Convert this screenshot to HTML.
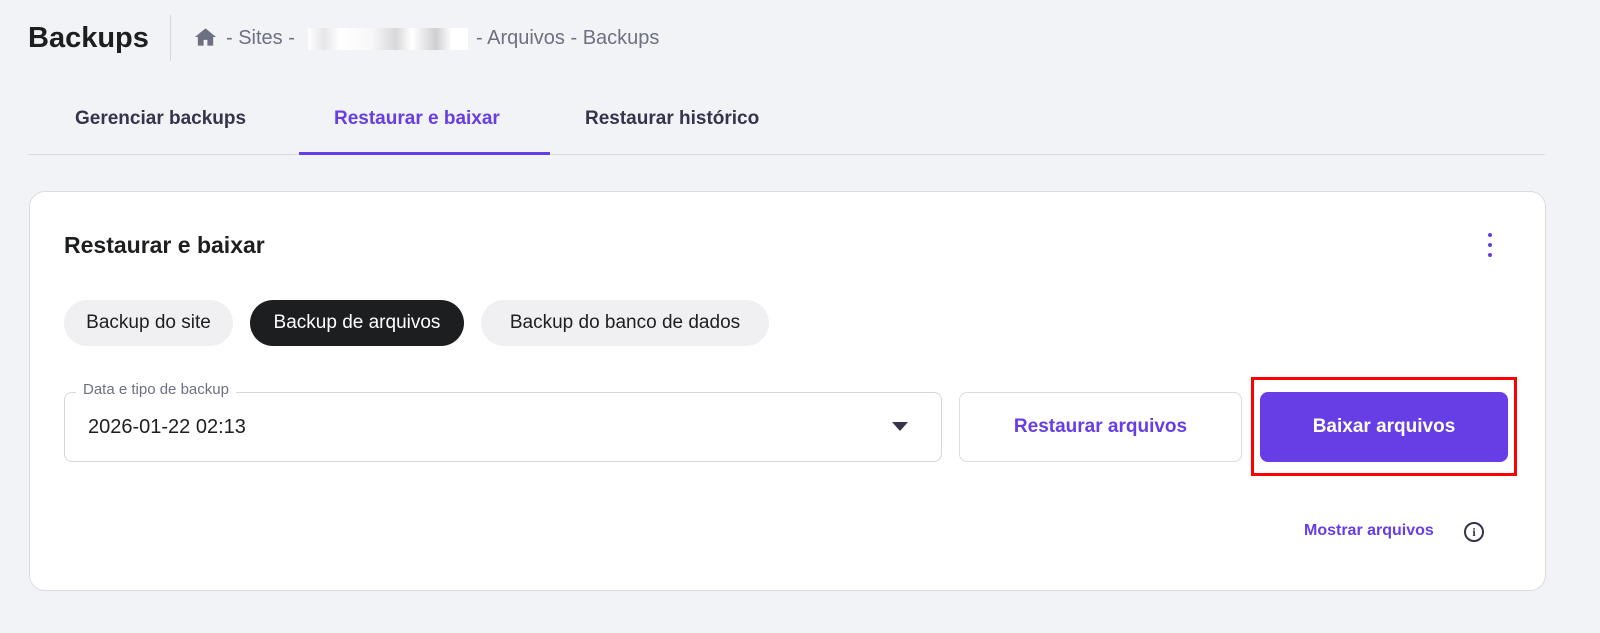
<!DOCTYPE html>
<html><head><meta charset="utf-8"><style>
*{box-sizing:border-box;margin:0;padding:0}
body{width:1600px;height:633px;background:#f2f3f6;font-family:"Liberation Sans",sans-serif;color:#1d1e20;position:relative;overflow:hidden}
.a{position:absolute}
.t{font-weight:bold;white-space:nowrap}
</style></head><body>
<div class="a t" style="left:28px;top:22px;font-size:29px;">Backups</div>
<div class="a" style="left:170px;top:15px;width:1px;height:46px;background:#d5d6da"></div>
<svg class="a" style="left:194px;top:27px" width="23" height="20" viewBox="0 0 24 20"><path d="M12 1 L1 10 H4 V19 H10 V13 H14 V19 H20 V10 H23 Z" fill="#6d7081"/></svg>
<div class="a" style="left:226px;top:27px;font-size:20px;color:#6d7081;white-space:nowrap">- Sites -</div>
<div class="a" style="left:308px;top:28px;width:160px;height:22px;background:linear-gradient(90deg,#fff 0,#e6e6e9 10%,#fff 20%,#f7f7f8 40%,#d8d8dc 55%,#fff 65%,#cfcfd3 80%,#fff 90%)"></div>
<div class="a" style="left:476px;top:27px;font-size:20px;color:#6d7081;white-space:nowrap">- Arquivos - Backups</div>
<div class="a t" style="left:75px;top:108px;font-size:19px;color:#36344d">Gerenciar backups</div>
<div class="a t" style="left:334px;top:108px;font-size:19px;color:#673de6">Restaurar e baixar</div>
<div class="a t" style="left:585px;top:108px;font-size:19px;color:#36344d">Restaurar histórico</div>
<div class="a" style="left:28px;top:154px;width:1517px;height:1px;background:#dadce0"></div>
<div class="a" style="left:299px;top:152px;width:251px;height:3px;background:#673de6"></div>
<div class="a" style="left:29px;top:191px;width:1517px;height:400px;background:#fff;border:1px solid #dadce0;border-radius:16px"></div>
<div class="a t" style="left:64px;top:232px;font-size:23px">Restaurar e baixar</div>
<div class="a" style="left:1488px;top:233px;width:4px;height:4px;border-radius:50%;background:#673de6;box-shadow:0 10px 0 #673de6,0 20px 0 #673de6"></div>
<div class="a" style="left:64px;top:300px;width:169px;height:46px;border-radius:23px;background:#f0f0f2;font-size:19px;line-height:46px;text-align:center">Backup do site</div>
<div class="a" style="left:250px;top:300px;width:214px;height:46px;border-radius:23px;background:#1d1e20;color:#fff;font-size:19px;line-height:46px;text-align:center">Backup de arquivos</div>
<div class="a" style="left:481px;top:300px;width:288px;height:46px;border-radius:23px;background:#f0f0f2;font-size:19px;line-height:46px;text-align:center">Backup do banco de dados</div>
<div class="a" style="left:64px;top:392px;width:878px;height:70px;border:1px solid #d5d6da;border-radius:8px"></div>
<div class="a" style="left:76px;top:381px;background:#fff;padding:0 7px;font-size:15px;color:#6d7081">Data e tipo de backup</div>
<div class="a" style="left:88px;top:416px;font-size:20px">2026-01-22 02:13</div>
<div class="a" style="left:892px;top:422px;width:0;height:0;border-left:8px solid transparent;border-right:8px solid transparent;border-top:9px solid #36344d"></div>
<div class="a t" style="left:959px;top:392px;width:283px;height:70px;border:1px solid #dadce0;border-radius:8px;color:#673de6;font-size:19px;line-height:68px;text-align:center">Restaurar arquivos</div>
<div class="a" style="left:1251px;top:377px;width:266px;height:99px;border:3px solid #f00"></div>
<div class="a t" style="left:1260px;top:392px;width:248px;height:70px;background:#673de6;border-radius:8px;color:#fff;font-size:19px;line-height:70px;text-align:center">Baixar arquivos</div>
<div class="a t" style="left:1304px;top:522px;font-size:16px;color:#673de6">Mostrar arquivos</div>
<div class="a" style="left:1464px;top:522px;width:20px;height:20px;border:2px solid #36344d;border-radius:50%;font:bold 12px/16px 'Liberation Serif',serif;text-align:center;color:#36344d">i</div>
</body></html>
